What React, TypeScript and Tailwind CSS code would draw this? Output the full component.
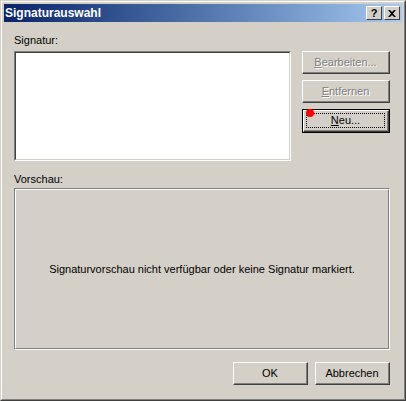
const font = { fontFamily: '"Liberation Sans", Arial, sans-serif' };

function Btn({ label, accel, rest, disabled, focused, className = '' }: { label?: string; accel?: string; rest: string; disabled?: boolean; focused?: boolean; className?: string }) {
  const outer = focused ? 'border border-black' : '';
  return (
    <div className={`${outer} ${className}`}>
      <div className="h-full border-t border-l border-t-white border-l-white border-r border-b border-r-[#404040] border-b-[#404040] bg-[#d4d0c8]">
        <div className="flex h-full items-center justify-center border-r border-b border-r-[#808080] border-b-[#808080] p-[2px]">
          <div className={`flex h-full w-full items-center justify-center ${focused ? 'border border-dotted border-black' : ''}`}>
            <span className={`text-[11px] leading-[13px] ${disabled ? 'text-[#808080] [text-shadow:1px_1px_0_#ffffff]' : 'text-black'}`}>
              {accel && <span className="underline">{accel}</span>}
              {rest}
            </span>
          </div>
        </div>
      </div>
    </div>
  );
}

export default function App() {
  return (
    <div style={font} className="h-[401px] w-[406px] overflow-hidden">
      <div className="h-full border border-t-[#d4d0c8] border-l-[#d4d0c8] border-r-[#404040] border-b-[#404040] bg-[#d4d0c8]">
        <div className="flex h-full flex-col border border-t-white border-l-white border-r-[#808080] border-b-[#808080] p-[2px]">
          {/* title bar */}
          <div className="flex h-[18px] items-center bg-gradient-to-r from-[#0a246a] to-[#a6caf0] pl-[1px] pr-[2px]">
            <span className="flex-1 text-[12px] font-bold leading-[14px] text-white">Signaturauswahl</span>
            <div className="flex gap-[2px]">
              <div className="flex h-[14px] w-[16px] items-center justify-center border border-t-white border-l-white border-r-[#404040] border-b-[#404040] bg-[#d4d0c8] text-[11px] font-bold leading-none text-black">?</div>
              <div className="flex h-[14px] w-[16px] items-center justify-center border border-t-white border-l-white border-r-[#404040] border-b-[#404040] bg-[#d4d0c8]">
                <svg width="8" height="7" viewBox="0 0 8 7">
                  <path d="M0 0h2l2 2 2-2h2L5 3.5 8 7H6L4 5 2 7H0l3-3.5z" fill="#000" />
                </svg>
              </div>
            </div>
          </div>

          <div className="flex-1 pl-[10px] pr-[12px]">
            <div className="mt-[12px] text-[11px] leading-[13px] text-black">Signatur:</div>
            <div className="mt-[4px] flex items-start">
              <div className="h-[110px] w-[277px] border border-t-[#808080] border-l-[#808080] border-r-white border-b-white">
                <div className="h-full border border-t-[#404040] border-l-[#404040] border-r-[#d4d0c8] border-b-[#d4d0c8] bg-white" />
              </div>
              <div className="relative ml-[11px] flex w-[88px] flex-col gap-[6px]">
                <Btn className="h-[23px]" accel="B" rest="earbeiten..." disabled />
                <Btn className="h-[23px]" accel="E" rest="ntfernen" disabled />
                <Btn className="h-[24px]" accel="N" rest="eu..." focused />
                <span className="absolute left-[4px] top-[58px] h-[8px] w-[8px] rounded-full bg-[#ff0000]" />
              </div>
            </div>
            <div className="mt-[12px] text-[11px] leading-[13px] text-black">Vorschau:</div>
            <div className="mt-[2px] h-[162px] w-[376px] border border-t-[#808080] border-l-[#808080] border-r-white border-b-white">
              <div className="flex h-full items-center justify-center border border-t-white border-l-white border-r-[#808080] border-b-[#808080]">
                <span className="text-[11px] leading-[13px] text-black">Signaturvorschau nicht verfügbar oder keine Signatur markiert.</span>
              </div>
            </div>
            <div className="mt-[12px] flex justify-end gap-[7px]">
              <Btn className="h-[23px] w-[75px]" rest="OK" />
              <Btn className="h-[23px] w-[75px]" rest="Abbrechen" />
            </div>
          </div>
        </div>
      </div>
    </div>
  );
}
